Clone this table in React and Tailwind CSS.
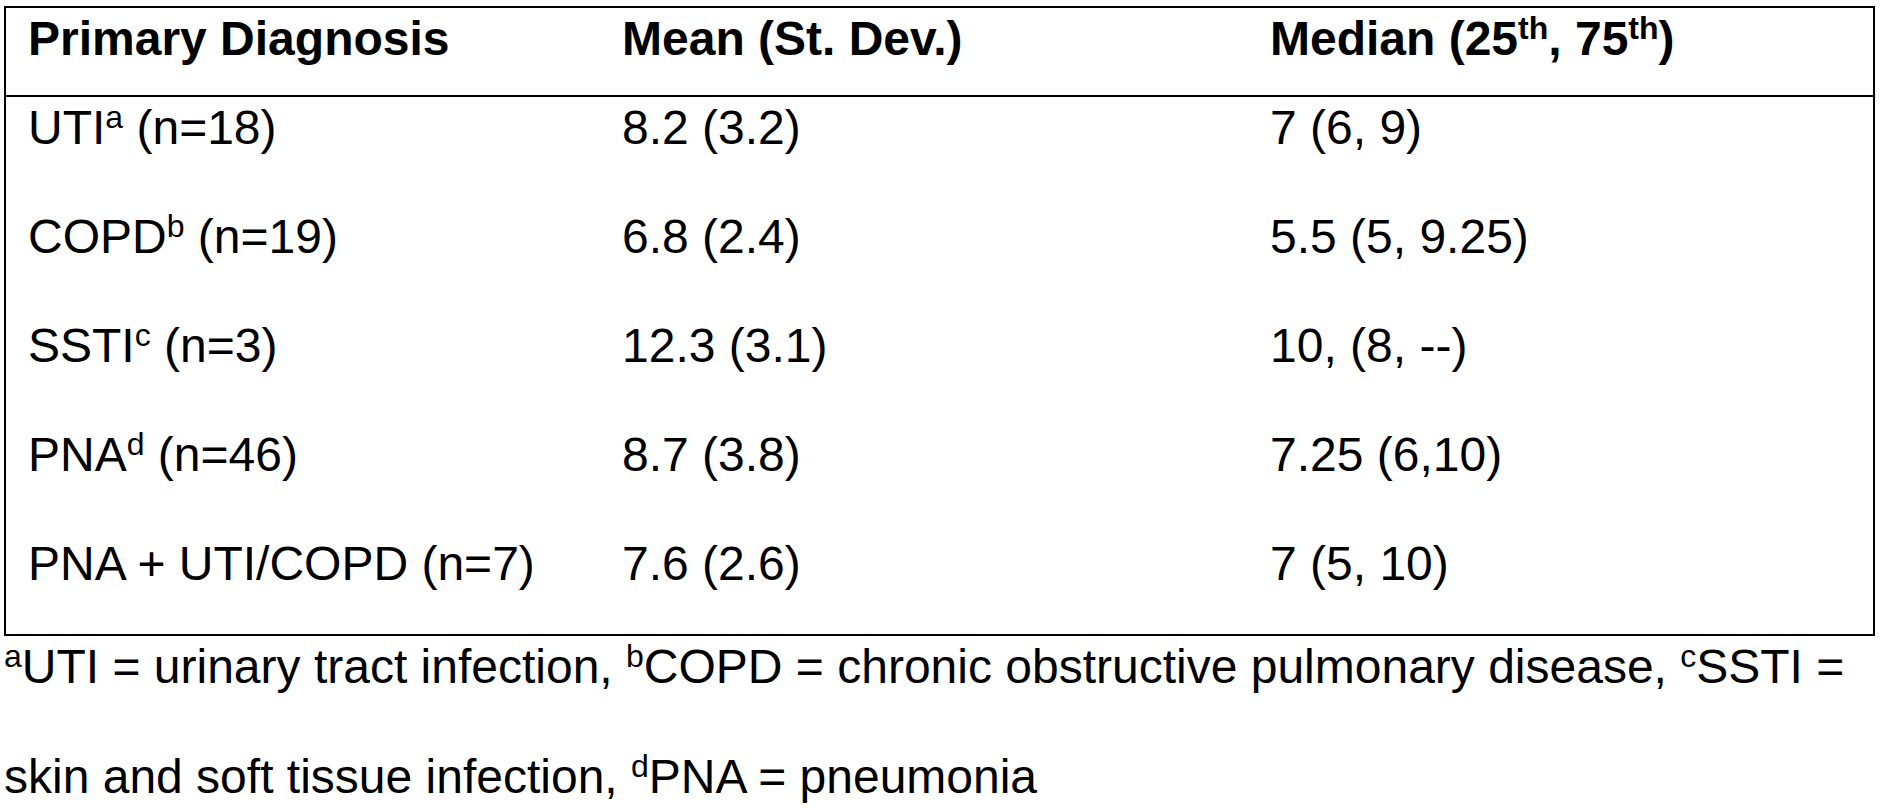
import React from 'react';

const Sup = ({ children }) => (
    <sup className="relative top-[-16px] align-baseline text-[32px] leading-none">{children}</sup>
);

const rows = [
    { label: <>UTI<Sup>a</Sup> (n=18)</>, mean: '8.2 (3.2)', median: '7 (6, 9)' },
    { label: <>COPD<Sup>b</Sup> (n=19)</>, mean: '6.8 (2.4)', median: '5.5 (5, 9.25)' },
    { label: <>SSTI<Sup>c</Sup> (n=3)</>, mean: '12.3 (3.1)', median: '10, (8, --)' },
    { label: <>PNA<Sup>d</Sup> (n=46)</>, mean: '8.7 (3.8)', median: '7.25 (6,10)' },
    { label: <>PNA + UTI/COPD (n=7)</>, mean: '7.6 (2.6)', median: '7 (5, 10)' },
];

const App = () => {
    return (
        <div className="min-h-screen w-[1880px] bg-white text-black font-['Liberation_Sans',Arial,sans-serif] text-[48px] leading-[62px]">
            <div className="pt-[6px] pl-[4px]">
                <div className="w-[1871px] border-2 border-black">
                    <div className="grid grid-cols-[594px_648px_1fr] h-[89px] border-b-2 border-black font-bold">
                        <div className="pl-[22px] whitespace-nowrap">Primary Diagnosis</div>
                        <div className="pl-[22px] whitespace-nowrap">Mean (St. Dev.)</div>
                        <div className="pl-[22px] whitespace-nowrap">Median (25<Sup>th</Sup>, 75<Sup>th</Sup>)</div>
                    </div>
                    {rows.map((row, i) => (
                        <div
                            key={i}
                            className={`grid grid-cols-[594px_648px_1fr] ${i === rows.length - 1 ? 'h-[101px]' : 'h-[109px]'}`}
                        >
                            <div className="pl-[22px] whitespace-nowrap">{row.label}</div>
                            <div className="pl-[22px] whitespace-nowrap">{row.mean}</div>
                            <div className="pl-[22px] whitespace-nowrap">{row.median}</div>
                        </div>
                    ))}
                </div>
            </div>
            <div className="pl-[4px]">
                <div className="h-[110px] whitespace-nowrap">
                    <Sup>a</Sup>UTI = urinary tract infection, <Sup>b</Sup>COPD = chronic obstructive pulmonary disease, <Sup>c</Sup>SSTI =
                </div>
                <div className="whitespace-nowrap">
                    skin and soft tissue infection, <Sup>d</Sup>PNA = pneumonia
                </div>
            </div>
        </div>
    );
};

export default App;
